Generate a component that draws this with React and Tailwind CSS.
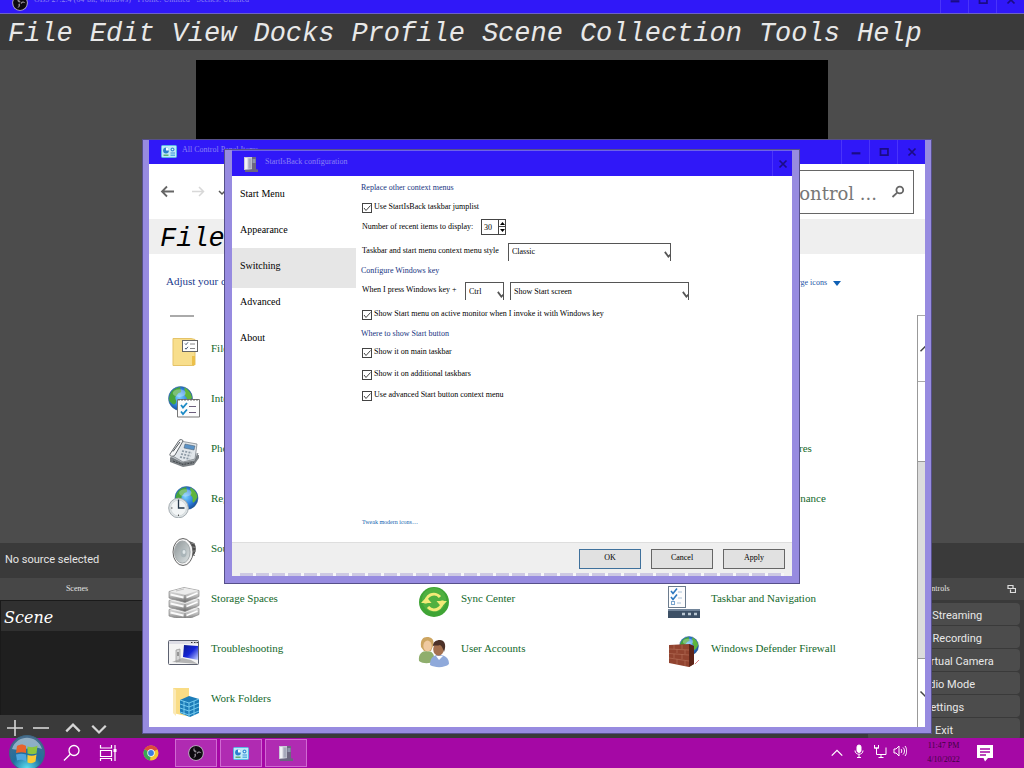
import React from "react";

const SERIF = "font-['Liberation_Serif',serif]";

/* ---------- small glyphs ---------- */

function Chevron({ dir = "down", className = "", sw = 2 }) {
  const d = dir === "down" ? "M2 6l6 6 6-6" : "M2 11l6-6 6 6";
  return (
    <svg viewBox="0 0 16 16" className={className} fill="none" stroke="currentColor" strokeWidth={sw}>
      <path d={d} />
    </svg>
  );
}

function ObsLogo({ className }) {
  return (
    <svg viewBox="0 0 16 16" className={className}>
      <circle cx="8" cy="8" r="7.800" fill="#b9b4bd" />
      <circle cx="8" cy="8" r="6.900" fill="#0d0a0f" />
      <g fill="#8d8790">
        <path d="M7.800 7.400C5.400 7.200 4.500 4.600 6.400 2.300 6 4.300 7 5.700 8.600 6z" />
        <path d="M8.500 8C9.600 5.900 12.300 6 13.600 8.300 12 7.200 10.200 7.600 9.300 9z" />
        <path d="M7.600 8.400C8.900 10.400 7.500 12.800 4.900 12.900 6.600 12 7 10.300 6.300 8.900z" />
      </g>
    </svg>
  );
}

function PanelLogo({ className }) {
  return (
    <svg viewBox="0 0 16 13" className={className}>
      <rect x="0.500" y="0.500" width="15" height="12" rx="1" fill="#bfeaf8" stroke="#58b6e6" />
      <circle cx="5" cy="5.500" r="2.900" fill="#2c7fd0" />
      <path d="M5 5.500V2.600a2.900 2.900 0 0 1 2.900 2.900z" fill="#f7fdff" />
      <circle cx="11.500" cy="4.500" r="2" fill="#3c8fd8" />
      <circle cx="11.500" cy="4.500" r="0.800" fill="#e8f8ff" />
      <rect x="9.500" y="7.500" width="4.500" height="1" fill="#3c8fd8" />
      <rect x="2.500" y="9.600" width="5" height="1.200" fill="#46a558" />
      <rect x="9.500" y="9.500" width="4.500" height="1.500" fill="#5ab0e6" />
    </svg>
  );
}

function StartBackLogo({ className }) {
  return (
    <svg viewBox="0 0 16 16" className={className}>
      <path d="M9 1h4v13H9z" fill="#6d6680" />
      <path d="M1 1h8v13H1z" fill="#c9c9d6" />
      <path d="M2 2h2.500v11H2z" fill="#f1f1f6" />
      <path d="M5.500 2.500h3v10h-3z" fill="#a6a8bb" />
      <path d="M9.500 3h3v4h-3z" fill="#8f95ac" />
      <path d="M2 14l8-1 5 .5V16H2z" fill="#6a6580" />
    </svg>
  );
}

/* ---------- control panel item icons ---------- */

function Globe({ cx, cy, r }) {
  return (
    <g>
      <circle cx={cx} cy={cy} r={r} fill="url(#sea)" stroke="#2a5d8e" strokeWidth="0.500" />
      <g transform={`translate(${cx} ${cy}) scale(${r / 12})`} fill="#46a53a">
        <path d="M-10-5C-8-9-4-11 0-11.500-1-9 2-8 0-6-3-6-3-3-5-2-6 1-3 2-5 5-7 8-9 4-11 3-12 0-11-3-10-5z" />
        <path d="M4-11C8-9 11-5 11.500-1 10 2 9 4 7 5 5 3 8 0 5-2 3-4 6-6 4-8z" fill="#5fb53c" />
      </g>
      <ellipse cx={cx - r * 0.1} cy={cy - r * 0.45} rx={r * 0.55} ry={r * 0.32} fill="#fff" opacity="0.3" />
    </g>
  );
}

function Defs() {
  return (
    <defs>
      <radialGradient id="sea" cx="45%" cy="45%" r="60%">
        <stop offset="0" stopColor="#7cd0ff" />
        <stop offset="0.600" stopColor="#2c7edc" />
        <stop offset="1" stopColor="#17488f" />
      </radialGradient>
      <linearGradient id="metal" x1="0" y1="0" x2="0" y2="1">
        <stop offset="0" stopColor="#f4f4f4" />
        <stop offset="0.600" stopColor="#b5b5b5" />
        <stop offset="1" stopColor="#666" />
      </linearGradient>
      <linearGradient id="cone" x1="0" y1="0" x2="1" y2="1">
        <stop offset="0" stopColor="#8e9698" />
        <stop offset="1" stopColor="#dde3e4" />
      </linearGradient>
      <linearGradient id="screen" x1="0" y1="0" x2="1" y2="1">
        <stop offset="0" stopColor="#0b1a8c" />
        <stop offset="0.500" stopColor="#1424d8" />
        <stop offset="1" stopColor="#c8d4ff" />
      </linearGradient>
    </defs>
  );
}

const drawings = {
  folder: (
    <>
      <path d="M5 2.500h18l4 1v25l-1 1H5z" fill="#f8de8c" stroke="#e5c368" />
      <path d="M24 20h3v9h-3z" fill="#ecc04a" />
      <rect x="14.500" y="4.500" width="15" height="11" fill="#fff" stroke="#666" />
      <path d="M17 7.500l1 1.200 2-2.400M17 12l1 1.200 2-2.400" stroke="#4b5c77" fill="none" />
      <path d="M22 8h5M22 12.500h5" stroke="#888" />
    </>
  ),
  internet: (
    <>
      <Globe cx={12.500} cy={12.500} r={12} />
      <path d="M9.500 13.500h22v17.500h-22z" fill="#fcfcfc" stroke="#777" />
      <path d="M11 13v2M14 13v2M17 13v2M20 13v2M23 13v2M26 13v2M29 13v2" stroke="#555" strokeWidth="0.800" />
      <path d="M13 19l2 2.500 4-4.500M13 25.500l2 2.500 4-4.500" stroke="#1b8ac6" strokeWidth="1.800" fill="none" />
      <path d="M21 20.500h7M21 26.500h7" stroke="#6b5d7c" />
    </>
  ),
  phone: (
    <>
      <path d="M2 22v4l13 5 11-2 5-7v-3z" fill="#7b8084" />
      <path d="M2 21l12 6 13-2 3-8" fill="#b9bfc4" stroke="#5d6367" strokeWidth="0.700" />
      <path d="M3 19L12 5l17 3-2 15-12 3z" fill="#e1e6ea" stroke="#81878c" strokeWidth="0.800" />
      <path d="M2 18L11 4.500c1-1.500 4-1 4 .5L7 19c-1.500 2-6 1.500-5-1z" fill="#f7f8f9" stroke="#60666b" />
      <path d="M5 15.500L12 6" stroke="#4a5055" />
      <path d="M17 8l10 2-1 4-10-2z" fill="#5b92c6" stroke="#4b5a68" strokeWidth="0.500" />
      <path d="M14 15l10 2M13 18l10 2M12 21l10 2" stroke="#8b98a3" strokeWidth="1.700" strokeDasharray="2 1.300" />
      <path d="M5 25l10 3.500 11-2" stroke="#3f4549" strokeDasharray="2 1" fill="none" />
    </>
  ),
  region: (
    <>
      <Globe cx={18.500} cy={12} r={11.500} />
      <circle cx="10.500" cy="22" r="9.800" fill="#dfe4e6" stroke="#a4acb0" />
      <circle cx="10.500" cy="22" r="7.800" fill="#f2f5f6" stroke="#c3cacd" strokeWidth="0.500" />
      <path d="M10.500 13.500V22h6" stroke="#26384a" strokeWidth="1.300" fill="none" />
      <path d="M10.500 30v-1.500M3 22h1.500" stroke="#555" />
    </>
  ),
  sound: (
    <>
      <path d="M16 3l10 4c3 4 2 10-1 13l-9 8z" fill="#4a4a4a" />
      <path d="M23 7l4 1M25 11l3 .5M25 15h3M24 19l3 .5" stroke="#8d8d8d" />
      <ellipse cx="15" cy="16" rx="10" ry="13.500" fill="#f3f3f3" stroke="#666" />
      <ellipse cx="14.300" cy="16" rx="7.800" ry="11" fill="url(#cone)" stroke="#a3a9ab" />
      <ellipse cx="15.500" cy="17" rx="3" ry="4.300" fill="#aab5b9" />
      <ellipse cx="16" cy="16" rx="1.500" ry="2" fill="#dfe6e8" />
    </>
  ),
  storage: (
    <>
      {[20, 11, 2].map((y) => (
        <g key={y} transform={`translate(0 ${y})`}>
          <path d="M1 3.500l15-4 15 3v6l-14 6-16-4.500z" fill="url(#metal)" stroke="#8a8a8a" strokeWidth="0.700" />
          <path d="M2 3.600l14-3.600 14 2.600-13 4.200z" fill="#ececec" />
          <path d="M17 7v7" stroke="#777" strokeWidth="0.700" />
          <path d="M18.500 9.500l11-4.500" stroke="#fff" strokeWidth="1.500" />
          <path d="M2.500 6.500l13 3" stroke="#fafafa" strokeWidth="1.800" />
          <path d="M8 3l8-2" stroke="#c5c5c5" />
        </g>
      ))}
    </>
  ),
  troubleshooting: (
    <>
      <rect x="0.500" y="4.500" width="30" height="24" rx="1" fill="#f4f4f4" stroke="#5c6170" />
      <path d="M1 5h29v3H1z" fill="#dedee6" />
      <path d="M23 6.500h1.500M26 6.500h1.500M28.500 6.500H30" stroke="#333" />
      <path d="M16 9l14 1v14l-15-3z" fill="url(#screen)" />
      <path d="M8 14l4-1v12l-4 1z" fill="#d6d6d6" stroke="#888" strokeWidth="0.600" />
      <path d="M9 17h2M9 19h2" stroke="#555" />
      <path d="M4 26l10-4 9 2 7 4z" fill="#9a9a9a" opacity="0.700" />
    </>
  ),
  workfolders: (
    <>
      <path d="M5 2h16v27l-3 1-13-3z" fill="#f9dc85" />
      <path d="M5 2l3 2v26l-3-3z" fill="#fbe9b5" />
      <path d="M12 14l9-4 10 3v14l-9 4-10-4z" fill="#1c7cb8" />
      <path d="M12 18l9 3 10-4M12 22l9 3 10-4M12 26l9 3 10-4M21 17v14M16 15v14M26 15v14M12 14l9 3 10-4" stroke="#7cd0f3" strokeWidth="0.900" fill="none" />
    </>
  ),
  sync: (
    <>
      <circle cx="16" cy="16" r="15" fill="#3fa435" />
      <circle cx="16" cy="14" r="12" fill="#5fbb4b" opacity="0.500" />
      <path d="M8 17.500a8 8 0 0 1 14-6.500" stroke="#f3ea78" strokeWidth="3" fill="none" />
      <path d="M3 17l5.500-6 5 6z" fill="#f3ea78" />
      <path d="M24 14.500a8 8 0 0 1-14 6.500" stroke="#f3ea78" strokeWidth="3" fill="none" />
      <path d="M29 15l-5.500 6-5-6z" fill="#f3ea78" />
    </>
  ),
  users: (
    <>
      <path d="M1 25c-1-7 3-10 8-10s8 3 7 10c-4 3-11 3-15 0z" fill="#8fae6d" />
      <path d="M3 11C2 4 5 1 9 1s8 2 6 9l-2 5H6z" fill="#cda561" />
      <ellipse cx="9.500" cy="10" rx="4.200" ry="5.400" fill="#efc9a0" />
      <path d="M12 29c0-7 3-10 9-10s10 3 10 9c-4 4-14 4-19 1z" fill="#8fa9da" />
      <ellipse cx="20.500" cy="13" rx="5.300" ry="6.800" fill="#a5714f" />
      <path d="M15 10c0-4 3-6 7-6s7 4 4 12c-1-3-2-6-4-7-2 1-5 0-7 1z" fill="#4c3128" />
      <path d="M18 20l3 4 4-4z" fill="#fff" />
    </>
  ),
  taskbar: (
    <>
      <rect x="0.500" y="0.500" width="17" height="21" fill="#fdfdfd" stroke="#6c7c8e" />
      <path d="M3 5l2 2.500 4-5M3 11l2 2.500 4-5" stroke="#2e79c0" strokeWidth="1.600" fill="none" />
      <rect x="3.500" y="15.500" width="3" height="3" fill="none" stroke="#7aa4cc" />
      <path d="M10 6h4M10 12h4M9 17h4" stroke="#a9c1d8" />
      <path d="M0 23h32v9H0z" fill="#3d5066" />
      <path d="M0 23h32v2H0z" fill="#72859a" />
      <path d="M14 28h3M20 28h3M26 28h3" stroke="#b9c6d2" strokeWidth="2.500" />
    </>
  ),
  firewall: (
    <>
      <Globe cx={21} cy={10} r={9.500} />
      <path d="M1 9l20-1 5 2v18l-5 3-20-4z" fill="#91432f" />
      <path d="M21 8l5 2v18l-5 3z" fill="#5d2418" />
      <path d="M1 13l20 1M1 17.500l20 1.500M1 22l20 3M6 9v4M14 9v4M9 13v4M17 14v4M6 18v4M14 18v5M9 23v5M17 25v5" stroke="#b9745c" strokeWidth="0.600" fill="none" />
      <path d="M27 28l4-4" stroke="#d88" />
    </>
  ),
};

const items = [
  ["File Explorer Options", "folder", "col-start-1"],
  ["Internet Options", "internet", "col-start-1"],
  ["Phone and Modem", "phone", "col-start-1"],
  ["Programs and Features", null, "col-start-3"],
  ["Region", "region", "col-start-1"],
  ["Security and Maintenance", null, "col-start-3"],
  ["Sound", "sound", "col-start-1"],
  ["Storage Spaces", "storage", "col-start-1"],
  ["Sync Center", "sync", "col-start-2"],
  ["Taskbar and Navigation", "taskbar", "col-start-3"],
  ["Troubleshooting", "troubleshooting", "col-start-1"],
  ["User Accounts", "users", "col-start-2"],
  ["Windows Defender Firewall", "firewall", "col-start-3"],
  ["Work Folders", "workfolders", "col-start-1"],
];

/* ---------- window parts ---------- */

const captionShapes = {
  Minimize: <path d="M3 9.500h10" strokeWidth="2.500" />,
  Maximize: <path d="M4 4.500h8.500v7H4z" strokeWidth="2" />,
  Close: <path d="M4 4l8 8M12 4l-8 8" strokeWidth="2" />,
};

function Caption({ names, width = "w-7" }) {
  return (
    <div className="flex shrink-0 self-stretch">
      {names.map((n) => (
        <button key={n} aria-label={n} className={`flex items-center justify-center border-l border-[#4a34fa] text-[#1b0c86] ${width}`}>
          <svg viewBox="0 0 16 16" className="size-3.5 shrink-0" fill="none" stroke="currentColor">
            {captionShapes[n]}
          </svg>
        </button>
      ))}
    </div>
  );
}

function ObsWindow() {
  const menus = ["File", "Edit", "View", "Docks", "Profile", "Scene", "Collection", "Tools", "Help"];
  const controls = ["Start Streaming", "Start Recording", "Start Virtual Camera", "Studio Mode", "Settings", "Exit"];
  return (
    <main className="flex min-h-0 flex-1 flex-col bg-[#4c4c4c]">
      <header className="-mt-3.5 flex h-7 shrink-0 items-center border-b border-[#6d62c8] bg-[#3018f8] pl-3">
        <ObsLogo className="mt-1.5 size-4" />
        <h1 className={`ml-1.5 flex-1 text-[8px] leading-3 text-[#8b80f4] ${SERIF}`}>
          OBS 27.2.4 (64-bit, windows) - Profile: Untitled - Scenes: Untitled
        </h1>
        <Caption names={["Minimize", "Maximize", "Close"]} />
      </header>
      <nav className="flex h-9 shrink-0 items-center gap-[17px] bg-[#3a3a3a] px-2 pt-1 font-['Liberation_Mono',monospace] text-[27px] italic leading-8 text-[#e8e8e8]">
        {menus.map((m) => (
          <button key={m}>{m}</button>
        ))}
      </nav>
      <section aria-label="Preview" className="flex min-h-0 flex-1 px-49 pt-2.5">
        <div className="flex-1 bg-black" />
      </section>
      <div className="flex h-[35px] shrink-0 items-center bg-[#3a3a3a] px-[5px] font-[Roboto,sans-serif] text-[11px] text-[#e4e4e4]">
        No source selected
      </div>
      <div className="flex h-40 shrink-0 justify-between bg-[#3a3a3a]">
        <section className="flex w-[154px] flex-col">
          <h2 className={`flex h-[22px] items-center justify-center bg-[#474747] text-[8px] text-[#e4e4e4] ${SERIF}`}>Scenes</h2>
          <ul className="flex-1 border-l border-t border-[#1a1a1a] bg-[#1f1f1f]">
            <li className="flex h-[30px] items-center bg-[#303030] pb-px pt-1 pl-[3px] font-['DejaVu_Serif',serif] text-base italic text-white">Scene</li>
          </ul>
          <div className="flex h-[23px] items-center gap-2 pl-1.5 pt-0.5 text-[#d6d6d6]">
            <button aria-label="Add scene">
              <svg viewBox="0 0 18 18" className="size-[18px]" stroke="currentColor" strokeWidth="1.600"><path d="M1 9h16M9 1v16" /></svg>
            </button>
            <button aria-label="Remove scene">
              <svg viewBox="0 0 18 18" className="size-[18px]" stroke="currentColor" strokeWidth="1.600"><path d="M1 9h16" /></svg>
            </button>
            <div className="ml-1.5 flex gap-2">
              <button aria-label="Move up"><Chevron dir="up" className="size-[18px]" /></button>
              <button aria-label="Move down"><Chevron className="size-[18px]" /></button>
            </div>
          </div>
        </section>
        <section className="flex w-[158px] flex-col">
          <h2 className={`flex h-[22px] items-center justify-between bg-[#474747] pl-14 pr-2 text-[8px] text-[#e4e4e4] ${SERIF}`}>
            Controls
            <svg viewBox="0 0 9 9" className="size-[9px]" fill="none" stroke="#ddd">
              <path d="M1 1.500h5M1 1v3.500h5V1M3.500 5.500v3h5v-4h-2" strokeWidth="1.200" />
            </svg>
          </h2>
          <div className="flex flex-col gap-px overflow-hidden pl-0.5 pr-1 pt-[3px] font-[Roboto,sans-serif] text-[11px] text-[#e8e8e8]">
            {controls.map((c) => (
              <button key={c} className="h-[22px] shrink-0 rounded-sm bg-[#4c4c4c] pt-1 leading-4">{c}</button>
            ))}
          </div>
        </section>
      </div>
    </main>
  );
}

function ControlPanelWindow() {
  return (
    <section
      aria-label="All Control Panel Items"
      className={`absolute left-[142px] top-[139px] flex h-[595px] w-[790px] flex-col overflow-hidden border-x-[7px] border-b-[7px] border-[#978be0] bg-white outline-1 -outline-offset-1 outline-[#56508a] ${SERIF}`}
    >
      <header className="flex h-[25px] shrink-0 items-center bg-[#3018f8] pl-3">
        <PanelLogo className="h-[13px] w-4" />
        <h2 className="ml-[5px] flex-1 pb-1 text-[8px] leading-3 text-[#8b80f4]">All Control Panel Items</h2>
        <Caption names={["Minimize", "Maximize", "Close"]} />
      </header>
      <div className="flex h-[55px] shrink-0 items-center pl-[11px] pr-[11px]">
        <button aria-label="Back" className="text-[#666]">
          <svg viewBox="0 0 16 16" className="size-4" fill="none" stroke="currentColor" strokeWidth="1.800"><path d="M14 7.500H2.500M7 2.500l-5 5 5 5" /></svg>
        </button>
        <button aria-label="Forward" className="ml-3.5 text-[#d8d8d8]">
          <svg viewBox="0 0 16 16" className="size-4" fill="none" stroke="currentColor" strokeWidth="1.500"><path d="M2 7.500h11M9 3l4.500 4.500L9 12" /></svg>
        </button>
        <button aria-label="Recent locations" className="ml-3 text-[#555]"><Chevron className="size-2" sw={3} /></button>
        <label className="ml-auto flex h-11 w-[200px] items-center border border-[#666] pr-2">
          <input
            aria-label="Search Control Panel"
            placeholder="Search Control ..."
            className="min-w-0 flex-1 bg-transparent pt-1 text-right font-['DejaVu_Serif',serif] text-lg leading-6 outline-none placeholder:text-[#777]"
          />
          <svg viewBox="0 0 14 14" className="ml-3.5 size-3.5" fill="none" stroke="#666" strokeWidth="1.800">
            <circle cx="8.800" cy="5" r="3.400" />
            <path d="M6.200 7.600L1.500 12" />
          </svg>
        </label>
      </div>
      <nav className="flex h-[35px] shrink-0 items-center overflow-hidden bg-[#efefef] px-[11px] pt-1 font-['Liberation_Mono',monospace] text-[27px] italic leading-8 text-black">
        <button>File</button>
      </nav>
      <div className="flex h-[61px] shrink-0 items-start justify-between pl-[17px] pr-[79px] pt-[19px]">
        <h3 className="text-[11px] leading-4 text-[#1b3a8c]">Adjust your computer's settings</h3>
        <button className="flex items-center gap-1.5 pr-[5px] pt-0.5 text-[8px] leading-4 text-[#1c55a8]">
          View by: Large icons
          <svg viewBox="0 0 8 5" className="h-[5px] w-2" fill="#1060b4"><path d="M0 0h8L4 5z" /></svg>
        </button>
      </div>
      <div className="flex min-h-0 flex-1">
        <div className="flex-1 overflow-hidden">
          <div className="ml-[21px] h-0.5 w-6 bg-[#aaa]" />
          <ul className="grid auto-rows-[50px] grid-cols-[250px_250px_250px] pl-[19px] pt-2.5">
            {items.map(([name, art, column]) => (
              <li key={name} className={`flex items-center gap-[11px] ${column}`}>
                <svg viewBox="0 0 32 32" className="size-8 shrink-0">
                  <Defs />
                  {art && drawings[art]}
                </svg>
                <a href="#item" className="pb-2 text-[11px] leading-4 text-[#14682a]">{name}</a>
              </li>
            ))}
          </ul>
        </div>
        <div className="flex w-2 flex-col overflow-hidden border-l border-[#999] text-[#444]">
          <button aria-label="Scroll up" className="flex h-[67px] shrink-0 items-center border-y border-[#aaa] pl-px"><Chevron dir="up" className="size-3 shrink-0" /></button>
          <div className="h-[79px] shrink-0" />
          <div className="flex-1 border-y border-[#999] bg-[#dcdcdc]" />
          <button aria-label="Scroll down" className="flex h-[68px] shrink-0 items-center pl-px"><Chevron className="size-3 shrink-0" /></button>
        </div>
      </div>
    </section>
  );
}

function Check({ label, height }) {
  return (
    <label className={`flex items-center gap-0.5 pl-px ${height}`}>
      <span className="mt-0.5 grid size-2.5 place-items-center">
        <input type="checkbox" defaultChecked className="peer col-start-1 row-start-1 size-2.5 appearance-none border border-[#444] bg-white" />
        <svg viewBox="0 0 10 10" className="pointer-events-none invisible col-start-1 row-start-1 size-2.5 peer-checked:visible" fill="none" stroke="#444">
          <path d="M2 5l2 2.500L8.500 2.500" />
        </svg>
      </span>
      {label}
    </label>
  );
}

function Pick({ id, value, width, label }) {
  return (
    <span className={`mt-0.5 grid h-[18px] items-center ${width}`}>
      <select id={id} aria-label={label} defaultValue={value} className="col-start-1 row-start-1 h-full w-full appearance-none border-x border-t border-[#555] bg-white pl-[3px] text-[8px] outline-none">
        <option>{value}</option>
      </select>
      <svg viewBox="0 0 8 8" className="pointer-events-none col-start-1 row-start-1 mt-1.5 size-[7px] justify-self-end" fill="none" stroke="#555" strokeWidth="2">
        <path d="M1 1l4 5.500L8 3.500" />
      </svg>
    </span>
  );
}

function StartIsBackDialog() {
  const pages = ["Start Menu", "Appearance", "Switching", "Advanced", "About"];
  return (
    <section
      role="dialog"
      aria-label="StartIsBack configuration"
      className={`absolute left-[225px] top-[150px] flex h-[433px] w-[574px] flex-col overflow-hidden border-x-[7px] border-b-[7px] border-[#978be0] bg-white outline-1 outline-[#56508a] ${SERIF}`}
    >
      <header className="flex h-[26px] shrink-0 items-center border-t border-[#6d62e8] bg-[#3018f8] pl-[11px]">
        <StartBackLogo className="size-4" />
        <h2 className="ml-1.5 flex-1 pb-1 text-[8px] leading-3 text-[#8b80f4]">StartIsBack configuration</h2>
        <Caption names={["Close"]} width="w-5" />
      </header>
      <div className="flex min-h-0 flex-1">
        <nav className="flex w-[124px] shrink-0 flex-col text-[10px] text-black">
          {pages.map((p) => (
            <button key={p} className={p === "Switching" ? "-mb-1 h-10 bg-[#e6e6e6] pb-1.5 pl-2 text-left" : "h-9 pb-0.5 pl-2 text-left"}>{p}</button>
          ))}
        </nav>
        <form id="switching" className="flex flex-1 flex-col pl-[5px] pt-0.5 text-[8px] text-black">
          <h3 className="flex h-[19px] items-center text-[#16347f]">Replace other context menus</h3>
          <Check height="h-[19px]" label="Use StartIsBack taskbar jumplist" />
          <div className="flex h-[22px] items-center pl-px">
            <label htmlFor="recent" className="w-[119px]">Number of recent items to display:</label>
            <input id="recent" defaultValue="30" className="h-4 w-[18px] border border-[#444] pl-0.5 outline-none" />
            <span className="flex h-4 w-[7px] flex-col">
              <button type="button" aria-label="Increase" className="flex h-2 items-center justify-center border border-l-0 border-[#444]">
                <svg viewBox="0 0 5 3" className="h-[3px] w-[5px]"><path d="M0 3h5L2.500 0z" /></svg>
              </button>
              <button type="button" aria-label="Decrease" className="flex h-2 items-center justify-center border border-l-0 border-t-0 border-[#444]">
                <svg viewBox="0 0 5 3" className="h-[3px] w-[5px]"><path d="M0 0h5L2.500 3z" /></svg>
              </button>
            </span>
          </div>
          <div className="flex h-[25px] items-center pl-px">
            <label htmlFor="style" className="w-[146px]">Taskbar and start menu context menu style</label>
            <Pick id="style" value="Classic" width="w-[163px]" />
          </div>
          <h3 className="flex h-4 items-center text-[#16347f]">Configure Windows key</h3>
          <div className="flex h-[22px] items-center pl-px">
            <label htmlFor="modifier" className="w-[103px]">When I press Windows key +</label>
            <Pick id="modifier" value="Ctrl" width="w-[39px]" />
            <span className="w-1.5" />
            <Pick id="action" value="Show Start screen" width="w-[179px]" label="Action" />
          </div>
          <Check height="h-[26px]" label="Show Start menu on active monitor when I invoke it with Windows key" />
          <h3 className="flex h-3.5 items-center text-[#16347f]">Where to show Start button</h3>
          <Check height="h-[22px]" label="Show it on main taskbar" />
          <Check height="h-[22px]" label="Show it on additional taskbars" />
          <Check height="h-5" label="Use advanced Start button context menu" />
          <a href="#icons" className="mb-4 mt-auto pl-px text-[6px] leading-2 text-[#0f5fae]">Tweak modern icons…</a>
        </form>
      </div>
      <footer className="flex h-[34px] shrink-0 flex-col justify-between border-t border-[#dedede] bg-[#efefef]">
        <div className="flex justify-end gap-2.5 pr-[7px] pt-1.5 text-[8px] text-black">
          <button className="h-5 w-[62px] border border-[#3f719c] bg-[#e1e1e1] pb-0.5">OK</button>
          <button className="h-5 w-[62px] border border-[#666] bg-[#e1e1e1] pb-0.5">Cancel</button>
          <button className="h-5 w-[62px] border border-[#666] bg-[#e1e1e1] pb-0.5">Apply</button>
        </div>
        <div className="mx-2 h-[3px] bg-[repeating-linear-gradient(90deg,#cdc9e3_0_13px,#f6f6f8_13px_16px)]" />
      </footer>
    </section>
  );
}

function Taskbar() {
  const running = [
    ["OBS Studio", <ObsLogo key="o" className="size-4" />],
    ["Control Panel", <PanelLogo key="p" className="h-[13px] w-4" />],
    ["StartIsBack", <StartBackLogo key="s" className="size-4" />],
  ];
  return (
    <footer className="relative z-10 flex h-[30px] shrink-0 items-center bg-[#a508a5] pl-[9px] pr-[30px] text-white">
      <button aria-label="Start" className="-my-2 shrink-0">
        <svg viewBox="0 0 36 36" className="size-9">
          <defs>
            <radialGradient id="orb" cx="50%" cy="95%" r="95%">
              <stop offset="0" stopColor="#5fe3f2" />
              <stop offset="0.450" stopColor="#1f6f9f" />
              <stop offset="1" stopColor="#4a6d8c" />
            </radialGradient>
          </defs>
          <circle cx="18" cy="18" r="17.500" fill="url(#orb)" stroke="#3d6680" />
          <path d="M3 14C8-1 28-1 33 14 24 10 12 17 3 14z" fill="#e3f0f6" opacity="0.500" />
          <path d="M8 11c4-2 6-2 9 0v7c-3-1-6-1-10 0z" fill="#e8632c" />
          <path d="M18.500 11.500c4 1 7 1 10-1l-1 8c-3 1-6 1-9 0z" fill="#8cc63e" />
          <path d="M7 19.500c4-1 7-1 10 0v7c-3-2-6-2-9-1z" fill="#4fa5de" />
          <path d="M18.500 20c3 1 6 1 9-.5l-1 7c-3 2-5 2-8 1z" fill="#fbc934" />
        </svg>
      </button>
      <button aria-label="Search" className="ml-[18px]">
        <svg viewBox="0 0 18 18" className="size-[18px]" fill="none" stroke="currentColor" strokeWidth="1.300">
          <circle cx="11" cy="6.500" r="5" /><path d="M7.300 10.200L1 16.500" />
        </svg>
      </button>
      <button aria-label="Task view" className="ml-[18px]">
        <svg viewBox="0 0 18 18" className="size-[18px]" fill="none" stroke="currentColor" strokeWidth="1.200">
          <path d="M1.500 1v3h11V1M1.500 6.500h11v6h-11zM1.500 17v-2.500h11V17M16 1v16" /><path d="M14.500 6.500h3" strokeWidth="3" />
        </svg>
      </button>
      <button aria-label="Chrome" className="ml-[26px]">
        <svg viewBox="0 0 16 16" className="size-4">
          <circle cx="8" cy="8" r="7.500" fill="#f4c531" />
          <path d="M8 8L1.500 4.300A7.500 7.500 0 0 1 14.500 4.300z" fill="#dd4b3e" />
          <path d="M8 8l-1 7.400A7.500 7.500 0 0 1 1.500 4.300z" fill="#3aa757" />
          <circle cx="8" cy="8" r="3.700" fill="#fff" /><circle cx="8" cy="8" r="2.900" fill="#3b7de0" />
        </svg>
      </button>
      <div className="ml-4 flex h-7 gap-[3px]">
        {running.map(([name, icon]) => (
          <button key={name} aria-label={name} className="flex w-[42px] items-center justify-center border border-[#d069d2] bg-[#b02bb2]">{icon}</button>
        ))}
      </div>
      <div className={`ml-auto flex items-center ${SERIF}`}>
        <button aria-label="Show hidden icons"><Chevron dir="up" className="size-3.5" sw={1.500} /></button>
        <svg viewBox="0 0 12 14" className="mb-1 ml-[9px] h-3.5 w-3" fill="none" stroke="currentColor">
          <rect x="4" y="1" width="4" height="7.500" rx="2" fill="currentColor" /><path d="M2 6.500c0 5 8 5 8 0M6 10.500V13M4 13.500h4" />
        </svg>
        <svg viewBox="0 0 14 14" className="mb-1 ml-2 size-3.5" fill="none" stroke="currentColor">
          <path d="M1.500 1v3h4V1M1 4h5M3.500 4v6.500H13V3.500M8 10.500v3M5.500 13.500h5" />
        </svg>
        <svg viewBox="0 0 14 14" className="mb-1 ml-1.5 size-3.5" fill="none" stroke="currentColor">
          <path d="M1 5v4h2l3 3V2L3 5zM8 5c1 1 1 3 0 4M10 3.500c2 2 2 5 0 7M12 2c2.300 3 2.300 7 0 10" />
        </svg>
        <div className="ml-5 w-[33px] text-center text-[8px] leading-[14px] text-[#3d0440]">
          <div className="whitespace-nowrap">11:47 PM</div>
          <div>4/10/2022</div>
        </div>
        <button aria-label="Notifications" className="ml-4">
          <svg viewBox="0 0 18 18" className="size-[18px]">
            <path d="M1 1h16v13h-5l-3 3.500L7.500 14H1z" fill="#fff" /><path d="M4 5h10M4 8h10M4 11h6" stroke="#a508a5" strokeWidth="1.300" />
          </svg>
        </button>
      </div>
    </footer>
  );
}

export default function App() {
  return (
    <div className="relative flex h-screen min-h-[768px] flex-col overflow-hidden">
      <ObsWindow />
      <ControlPanelWindow />
      <StartIsBackDialog />
      <Taskbar />
    </div>
  );
}
